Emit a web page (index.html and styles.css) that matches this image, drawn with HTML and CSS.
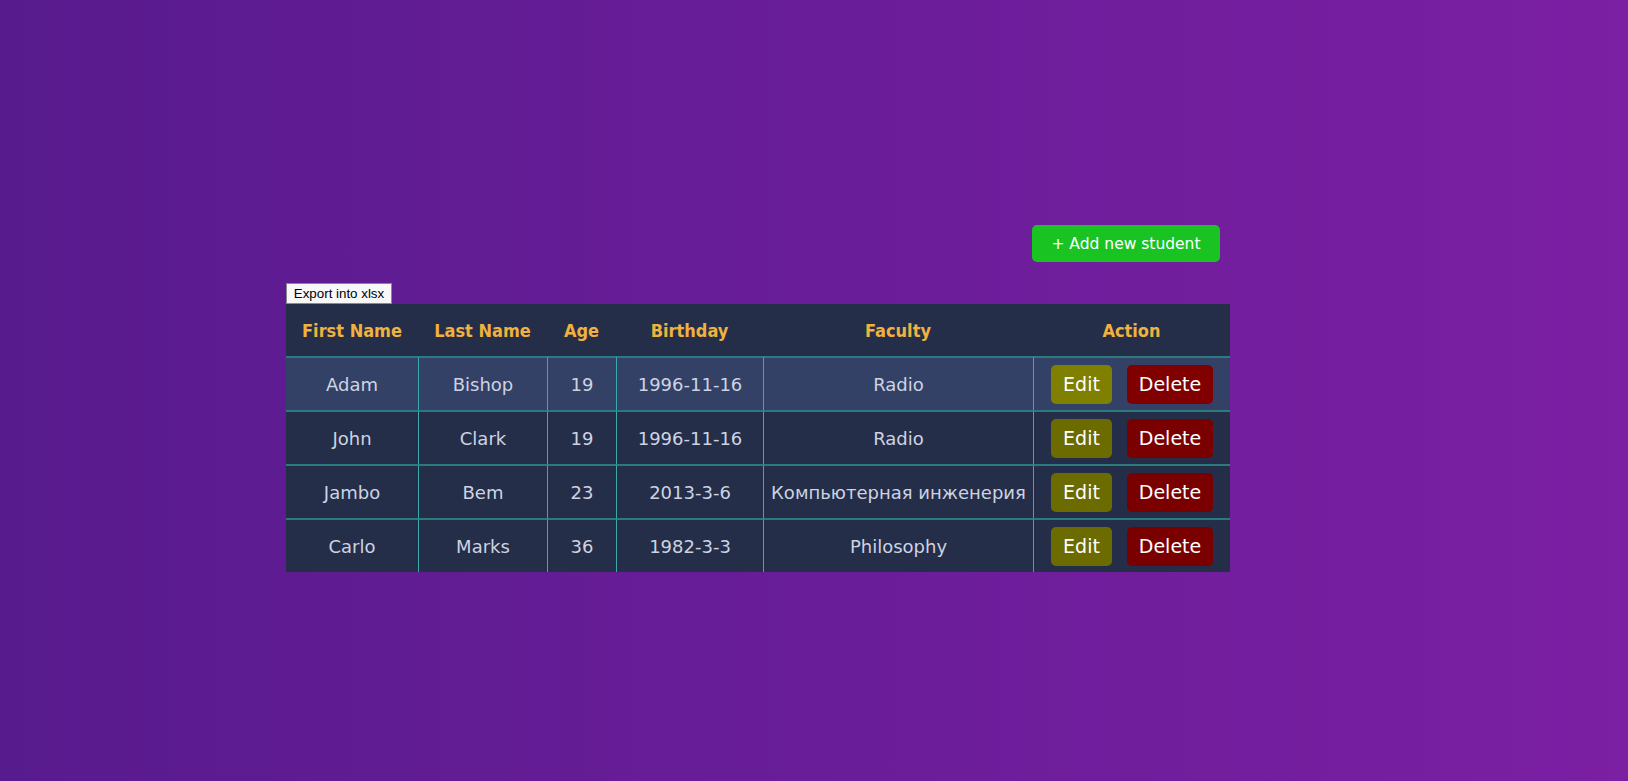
FILE: index.html
```html
<!DOCTYPE html>
<html lang="en">
<head>
<meta charset="utf-8">
<title>Students</title>
<link rel="stylesheet" href="styles.css">
</head>
<body>
<main class="page">
  <div class="toolbar">
    <button class="add-btn">+ Add new student</button>
  </div>
  <button class="export-btn">Export into xlsx</button>
  <table class="students">
    <colgroup>
      <col class="c1"><col class="c2"><col class="c3"><col class="c4"><col class="c5"><col class="c6">
    </colgroup>
    <thead>
      <tr>
        <th>First Name</th><th>Last Name</th><th>Age</th><th>Birthday</th><th>Faculty</th><th>Action</th>
      </tr>
    </thead>
    <tbody>
      <tr class="active">
        <td>Adam</td><td>Bishop</td><td>19</td><td>1996-11-16</td><td>Radio</td>
        <td><div class="actions"><button class="btn edit">Edit</button><button class="btn delete">Delete</button></div></td>
      </tr>
      <tr>
        <td>John</td><td>Clark</td><td>19</td><td>1996-11-16</td><td>Radio</td>
        <td><div class="actions"><button class="btn edit">Edit</button><button class="btn delete">Delete</button></div></td>
      </tr>
      <tr>
        <td>Jambo</td><td>Bem</td><td>23</td><td>2013-3-6</td><td>Компьютерная инженерия</td>
        <td><div class="actions"><button class="btn edit">Edit</button><button class="btn delete">Delete</button></div></td>
      </tr>
      <tr>
        <td>Carlo</td><td>Marks</td><td>36</td><td>1982-3-3</td><td>Philosophy</td>
        <td><div class="actions"><button class="btn edit">Edit</button><button class="btn delete">Delete</button></div></td>
      </tr>
    </tbody>
  </table>
</main>
</body>
</html>
```
FILE: styles.css
```css
html, body {
  margin: 0;
  padding: 0;
}
body {
  min-height: 100vh;
  background: linear-gradient(to right, #581b8e, #7b1fa3);
  font-family: "DejaVu Sans", "Noto Sans", sans-serif;
}
.page {
  width: 944px;
  margin-left: 286px;
  padding-top: 225px;
  display: flex;
  flex-direction: column;
  align-items: flex-start;
}
.toolbar {
  align-self: stretch;
  display: flex;
  justify-content: flex-end;
  padding-right: 10px;
  margin-bottom: 21px;
}
.add-btn {
  width: 188px;
  height: 37px;
  border: none;
  border-radius: 5px;
  background: #18c322;
  color: #ffffff;
  font-family: "DejaVu Sans", sans-serif;
  font-size: 15.5px;
  padding: 0;
}
.export-btn {
  width: 106px;
  height: 21px;
  padding: 0;
  border: 1px solid #8a8a8a;
  background: #f8f8f8;
  color: #000;
  font-family: "Liberation Sans", Arial, sans-serif;
  font-size: 13.33px;
}
.students {
  width: 944px;
  table-layout: fixed;
  border-collapse: separate;
  border-spacing: 0;
  background: #252e48;
  color: #cdd3e2;
  font-size: 18px;
}
.c1 { width: 132px; }
.c2 { width: 129px; }
.c3 { width: 69px; }
.c4 { width: 147px; }
.c5 { width: 270px; }
.c6 { width: 197px; }
.students th {
  height: 52px;
  padding: 0;
  color: #f0b23e;
  font-family: "DejaVu Sans Condensed", "DejaVu Sans", sans-serif;
  font-weight: bold;
  font-size: 18px;
  text-align: center;
}
.students td {
  height: 52px;
  padding: 0;
  text-align: center;
  border-top: 2px solid #2b7a7c;
  white-space: nowrap;
}
.students td + td {
  border-left: 1px solid #3aa9a9;
}
.students tr.active td {
  background: #334166;
}
.actions {
  display: flex;
  justify-content: center;
  gap: 15px;
}
.btn {
  height: 39px;
  padding: 0 13px;
  border: none;
  border-radius: 5px;
  color: #ffffff;
  font-family: "DejaVu Sans", sans-serif;
  font-size: 19px;
}
.edit {
  width: 61px;
  padding: 0;
  background: #6c6b00;
}
.delete {
  width: 86px;
  padding: 0;
  background: #7a0000;
}
.active .edit { background: #808000; }
.active .delete { background: #800000; }
```
